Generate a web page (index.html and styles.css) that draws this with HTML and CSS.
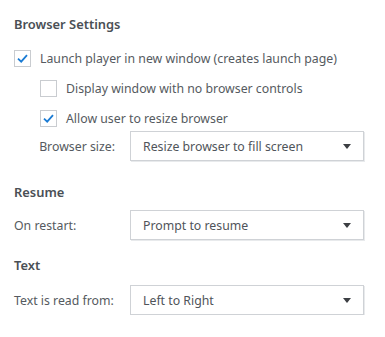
FILE: index.html
```html
<!DOCTYPE html>
<html>
<head>
<meta charset="utf-8">
<link rel="stylesheet" href="styles.css">
</head>
<body>
<div class="panel">
  <h2 class="heading first">Browser Settings</h2>
  <div class="check-row">
    <span class="box checked"><svg viewBox="0 0 17 17" width="17" height="17"><path d="M4 8.6 L7.2 11.6 L13 5.2" fill="none" stroke="#1a7bd4" stroke-width="1.8"/></svg></span>
    <span class="check-label">Launch player in new window (creates launch page)</span>
  </div>
  <div class="check-row indent">
    <span class="box"></span>
    <span class="check-label">Display window with no browser controls</span>
  </div>
  <div class="check-row indent">
    <span class="box checked"><svg viewBox="0 0 17 17" width="17" height="17"><path d="M4 8.6 L7.2 11.6 L13 5.2" fill="none" stroke="#1a7bd4" stroke-width="1.8"/></svg></span>
    <span class="check-label">Allow user to resize browser</span>
  </div>
  <div class="field-row size-row">
    <span class="field-label right">Browser size:</span>
    <div class="select"><span>Resize browser to fill screen</span><span class="caret"></span></div>
  </div>

  <h2 class="heading">Resume</h2>
  <div class="field-row resume-row">
    <span class="field-label">On restart:</span>
    <div class="select"><span>Prompt to resume</span><span class="caret"></span></div>
  </div>

  <h2 class="heading">Text</h2>
  <div class="field-row text-row">
    <span class="field-label">Text is read from:</span>
    <div class="select"><span>Left to Right</span><span class="caret"></span></div>
  </div>
</div>
</body>
</html>
```
FILE: styles.css
```css
html, body {
  margin: 0;
  padding: 0;
  background: #ffffff;
}
body {
  font-family: "Noto Sans", "Open Sans", sans-serif;
  font-size: 12.3px;
  color: #555a60;
}
.panel {
  padding: 14px 0 0 14px;
  width: 350px;
}
.heading {
  margin: 0;
  font-size: 12.9px;
  font-weight: 600;
  color: #4a4f55;
  line-height: 20px;
}
.heading.first {
  margin-bottom: 16px;
}
.check-row {
  display: flex;
  align-items: center;
  height: 17px;
  margin-bottom: 13px;
}
.check-row.indent {
  padding-left: 26px;
}
.box {
  width: 15px;
  height: 15px;
  border: 1px solid #c9ccd0;
  background: #fff;
  flex: none;
  position: relative;
  margin-right: 9px;
}
.box svg {
  position: absolute;
  left: -1px;
  top: -1px;
}
.check-label {
  line-height: 17px;
}
.field-row {
  display: flex;
  align-items: center;
  height: 30px;
}
.size-row {
  margin-top: -9px;
  margin-bottom: 21px;
}
.resume-row {
  margin-top: 8px;
  margin-bottom: 15px;
}
.text-row {
  margin-top: 10px;
}
.field-label {
  width: 116px;
  flex: none;
}
.field-label.right {
  box-sizing: border-box;
  text-align: right;
  width: 116px;
  padding-right: 15px;
}
.select {
  box-sizing: border-box;
  width: 234px;
  height: 30px;
  border: 1px solid #cfd2d6;
  box-shadow: 1px 1px 0 #e8eaec;
  display: flex;
  align-items: center;
  justify-content: space-between;
  padding: 0 12px 0 12px;
  background: #fff;
  color: #4f545a;
}
.caret {
  width: 0;
  height: 0;
  border-left: 4.5px solid transparent;
  border-right: 4.5px solid transparent;
  border-top: 5px solid #3c3f43;
}
```
